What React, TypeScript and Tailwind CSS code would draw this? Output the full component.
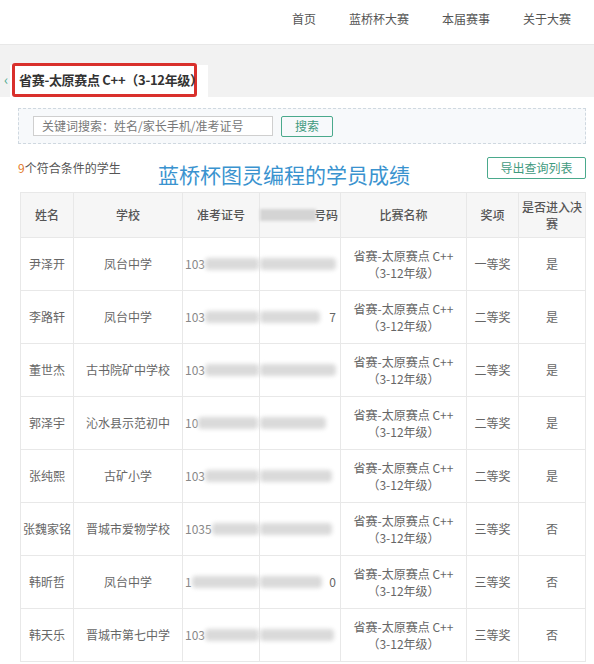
import React from 'react';

const students = [
  { name: '尹泽开', school: '凤台中学', id: '103', award: '一等奖', final: '是', blur: [56, 76], tail: '' },
  { name: '李路轩', school: '凤台中学', id: '103', award: '二等奖', final: '是', blur: [56, 60], tail: '7' },
  { name: '董世杰', school: '古书院矿中学校', id: '103', award: '二等奖', final: '是', blur: [56, 76], tail: '' },
  { name: '郭泽宇', school: '沁水县示范初中', id: '10', award: '二等奖', final: '是', blur: [60, 66], tail: '' },
  { name: '张纯熙', school: '古矿小学', id: '103', award: '二等奖', final: '是', blur: [56, 72], tail: '' },
  { name: '张魏家铭', school: '晋城市爱物学校', id: '1035', award: '三等奖', final: '否', blur: [48, 72], tail: '' },
  { name: '韩昕哲', school: '凤台中学', id: '1', award: '三等奖', final: '否', blur: [68, 62], tail: '0' },
  { name: '韩天乐', school: '晋城市第七中学', id: '103', award: '三等奖', final: '否', blur: [56, 74], tail: '' },
];

const navItems = ['首页', '蓝桥杯大赛', '本届赛事', '关于大赛'];

export default function App() {
  return (
    <div className="w-[594px] h-[664px] overflow-hidden bg-white text-[#666] font-['Noto_Sans_CJK_SC','Liberation_Sans',sans-serif]">
      {/* Top nav */}
      <div className="h-[45px] flex items-start justify-end pt-[10px] pr-[23px] gap-[33px] text-[12px] text-[#555] border-b border-[#e8e8e8]">
        {navItems.map((item) => (
          <span key={item}>{item}</span>
        ))}
      </div>

      {/* Tab band */}
      <div className="h-[52px] bg-[#f2f2f2] flex items-end">
        <span className="text-[#4aa98c] text-[14px] leading-none mb-[11px] ml-[4px] w-[6px]">‹</span>
        <div className="h-[32px] w-[198px] bg-white relative">
          <div className="absolute left-[2px] top-[-2px] w-[185px] h-[34px] border-[3px] border-[#d9302c] rounded-[3px] flex items-center pl-[4px] text-[13px] font-bold text-[#333] whitespace-nowrap tracking-[-0.3px]">
            省赛-太原赛点 C++（3-12年级）
          </div>
        </div>
      </div>

      {/* Content */}
      <div className="pl-[18px] pr-[8px] pt-[11px]">
        <div className="h-[36px] border border-dashed border-[#cfd8e0] bg-[#f7f9fb] flex items-center pl-[14px] gap-[8px]">
          <div className="w-[240px] h-[20px] border border-[#cfcfcf] bg-white text-[12px] text-[#777] pl-[8px] flex items-center">
            关键词搜索：姓名/家长手机/准考证号
          </div>
          <div className="w-[52px] h-[21px] border border-[#4aa98c] rounded-[2px] text-[12px] text-[#3f9a7e] flex items-center justify-center">
            搜索
          </div>
        </div>

        <div className="flex items-start mt-[13px] h-[35px]">
          <div className="text-[12px] text-[#555] mt-[2px] w-[140px]">
            <span className="text-[#e3792b]">9</span>个符合条件的学生
          </div>
          <div className="text-[21px] leading-[24px] text-[#3a93cf] mt-[5px]">蓝桥杯图灵编程的学员成绩</div>
          <div className="ml-auto w-[99px] h-[22px] border border-[#4aa98c] rounded-[2px] text-[12px] text-[#3f9a7e] flex items-center justify-center">
            导出查询列表
          </div>
        </div>

        <table className="w-[565px] ml-[2px] border-collapse table-fixed text-[12px] text-[#666]">
          <colgroup>
            <col className="w-[53px]" />
            <col className="w-[109px]" />
            <col className="w-[77px]" />
            <col className="w-[81px]" />
            <col className="w-[126px]" />
            <col className="w-[52px]" />
            <col className="w-[67px]" />
          </colgroup>
          <thead>
            <tr className="h-[45px] bg-[#f6f6f6] text-[#555]">
              <th className="font-medium border border-[#e8e8e8]">姓名</th>
              <th className="font-medium border border-[#e8e8e8]">学校</th>
              <th className="font-medium border border-[#e8e8e8]">准考证号</th>
              <th className="font-medium border border-[#e8e8e8] p-0">
                <div className="flex items-center">
                  <div className="w-[56px] h-[12px] bg-[#d4d4d4] blur-[1.5px]" />
                  <span className="ml-[-2px]">号码</span>
                </div>
              </th>
              <th className="font-medium border border-[#e8e8e8]">比赛名称</th>
              <th className="font-medium border border-[#e8e8e8]">奖项</th>
              <th className="font-medium border border-[#e8e8e8] leading-[17px] p-0">是否进入决赛</th>
            </tr>
          </thead>
          <tbody>
            {students.map((s) => (
              <tr key={s.name} className="h-[53px]">
                <td className="border border-[#e8e8e8] text-center whitespace-nowrap p-0">{s.name}</td>
                <td className="border border-[#e8e8e8] text-center whitespace-nowrap p-0">{s.school}</td>
                <td className="border border-[#e8e8e8] pl-[2px] p-0">
                  <div className="flex items-center">
                    <span className="text-[#888]">{s.id}</span>
                    <div
                      className="h-[12px] bg-[#dadada] blur-[2px] rounded-[4px]"
                      style={{ width: `${s.blur[0]}px` }}
                    />
                  </div>
                </td>
                <td className="border border-[#e8e8e8] p-0">
                  <div className="flex items-center pr-[4px]">
                    <div
                      className="h-[12px] bg-[#dadada] blur-[2px] rounded-[4px]"
                      style={{ width: `${s.blur[1]}px` }}
                    />
                    <span className="ml-auto">{s.tail}</span>
                  </div>
                </td>
                <td className="border border-[#e8e8e8] text-center leading-[17px] p-0">
                  省赛-太原赛点 C++
                  <br />（3-12年级）
                </td>
                <td className="border border-[#e8e8e8] text-center p-0">{s.award}</td>
                <td className="border border-[#e8e8e8] text-center p-0">{s.final}</td>
              </tr>
            ))}
          </tbody>
        </table>
      </div>
    </div>
  );
}
